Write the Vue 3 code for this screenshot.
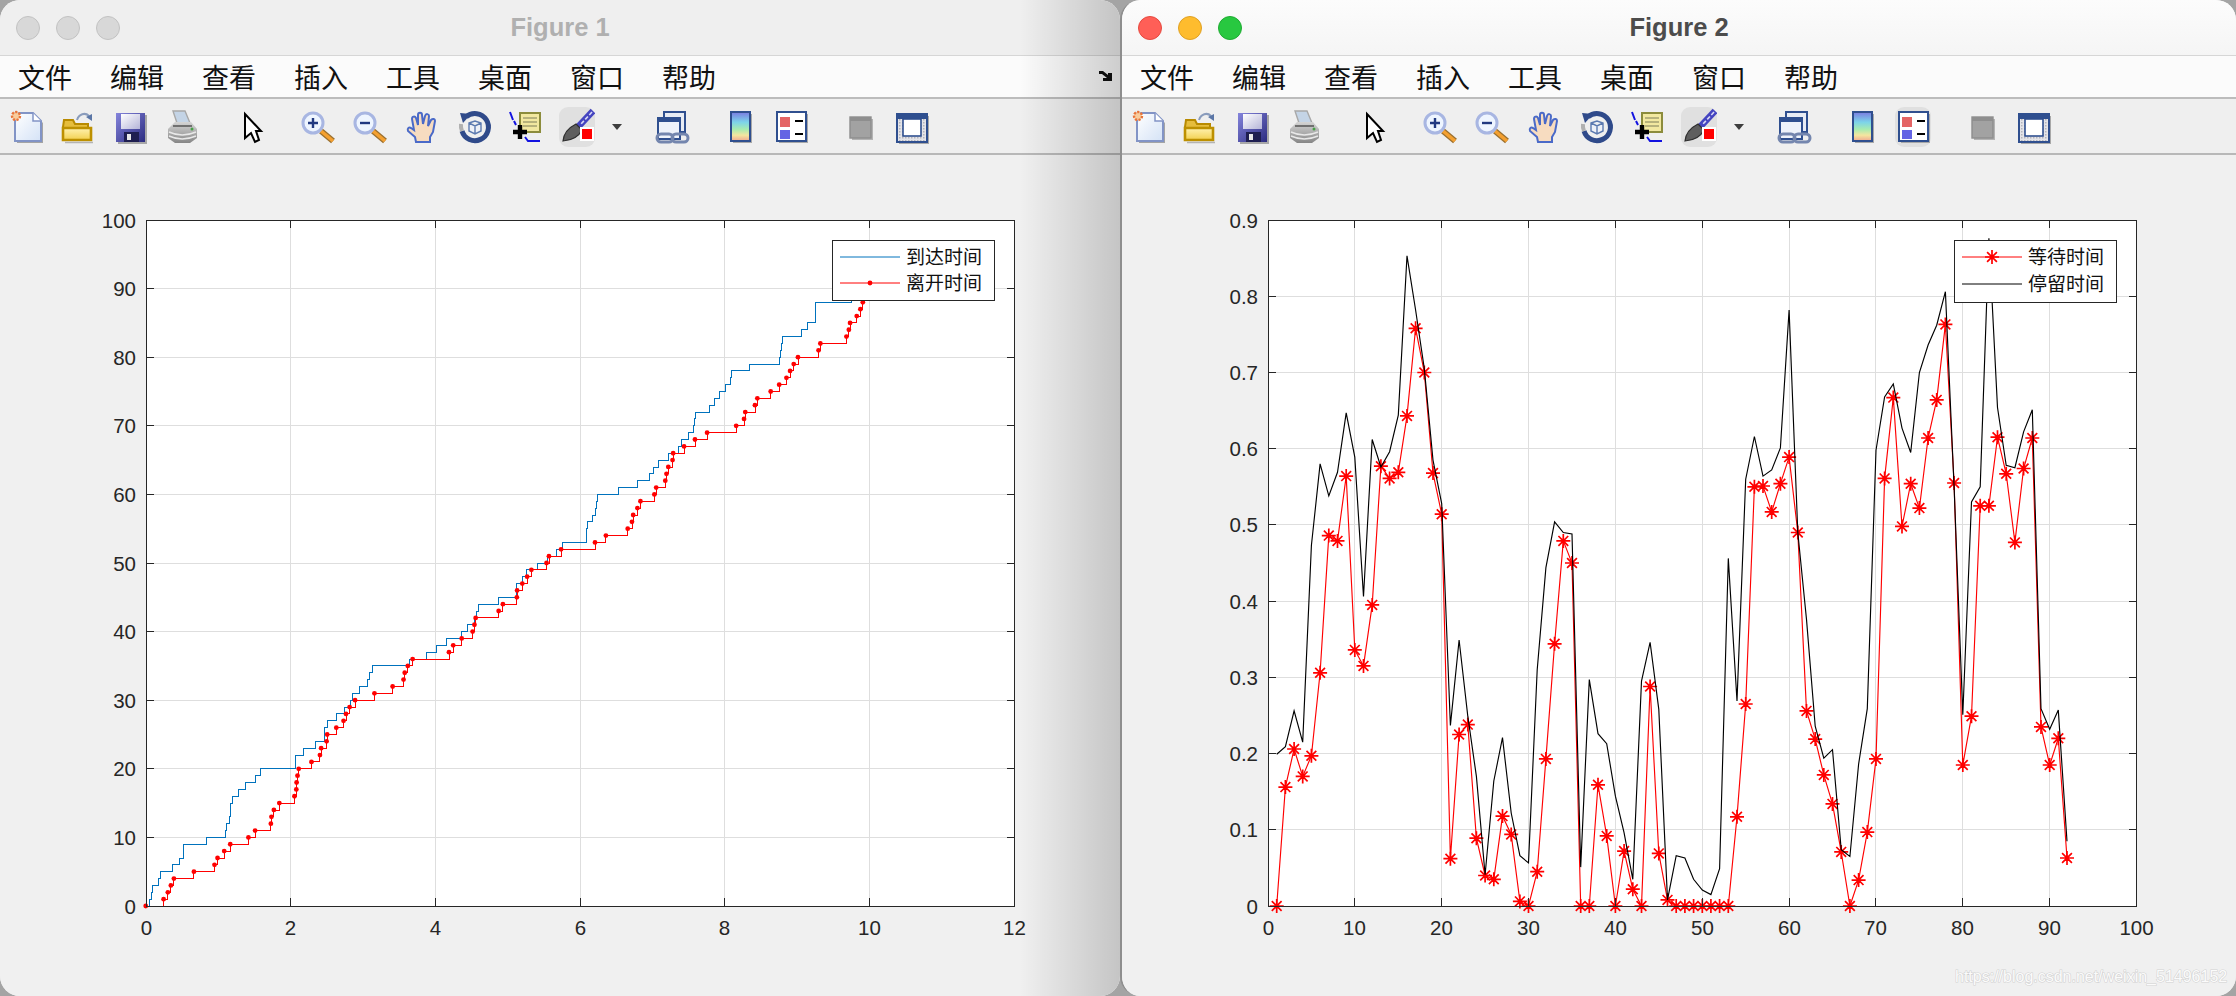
<script setup>
const menus = ['文件', '编辑', '查看', '插入', '工具', '桌面', '窗口', '帮助']

const toolSpec = [
  ['new', 8], ['open', 59], ['save', 112], ['print', 164], ['cursor', 235],
  ['zoomin', 300], ['zoomout', 352], ['hand', 404], ['rotate', 457], ['data', 507],
  ['brush', 559], ['caret', 610, 14], ['link', 654], ['colorbar', 722], ['legend', 773],
  ['square', 843], ['plotbox', 893]
]
let edge = 0
const tools = toolSpec.map(([name, left, width = 36]) => {
  const gap = left - edge
  edge = left + width
  return { name, gap, width }
})

/* Figure 1: x positions measured per level */
const AX1 = { l: 146, r: 1014, t: 220, b: 906 }
const sx1 = (z) => 100 + z / 1.6505
const sy1 = (v) => AX1.b - v * 6.86
const arrive = [75.5, 81, 85, 86, 96, 99, 119, 131, 137, 137, 176, 207, 209, 213, 215, 216, 218, 229, 240, 256, 265, 322, 323, 336, 356, 370, 371, 375, 391, 404, 414, 416, 429, 442, 445, 449, 510, 539, 556, 571, 597, 606, 618, 622, 624, 657, 687, 688, 697, 704, 722, 739, 754, 763, 803, 803, 804, 812, 818, 819, 821, 856, 887, 907, 914, 921, 938, 955, 959, 971, 980, 981, 983, 1006, 1014, 1022, 1032, 1041, 1042, 1072, 1122, 1123, 1125, 1126, 1158, 1168, 1181, 1181, 1181, 1240, 1245, 1250, 1255]
const leave = [75.5, 105, 112, 117, 122, 155, 189, 194, 205, 215, 245, 256, 282, 283, 287, 296, 321, 324, 324.5, 326, 328, 349, 363, 365, 374, 375, 390, 402, 406, 412, 421, 453, 483, 501, 503, 508, 516, 576, 583, 597, 615, 618, 620, 658, 665, 688, 688.5, 697, 705, 712, 737, 741, 761, 817, 835, 871, 878, 880, 887, 892, 915, 918, 933, 935, 938, 945, 946, 964, 982, 1002, 1050, 1063, 1065, 1081, 1085, 1107, 1121, 1133, 1139, 1145, 1152, 1186, 1189, 1232, 1236, 1238, 1249, 1255, 1259, 1262, 1264, 1266, 1268]

const stairs = (list) => {
  let d = `M${sx1(list[0]).toFixed(1)} ${sy1(0)}`
  list.forEach((z, k) => {
    d += `H${sx1(z).toFixed(1)}V${sy1(k).toFixed(1)}`
  })
  return d
}
const bluePath = stairs(arrive)
const redPath = stairs(leave)
const redDots = leave.map((z, k) => ({ x: sx1(z), y: sy1(k) }))

/* Figure 2 */
const AX2 = { l: 1268, r: 2136.5, t: 220, b: 906 }
const sx2 = (v) => AX2.l + v * 8.685
const sy2 = (v) => AX2.b - v * 762.2
const wait = [0, .156, .206, .17, .197, .306, .486, .479, .564, .336, .315, .395, .577, .561, .569, .643, .758, .7, .568, .514, .062, .225, .238, .089, .04, .035, .118, .094, .006, 0, .045, .193, .344, .479, .45, 0, 0, .159, .092, 0, .072, .022, 0, .288, .069, .008, 0, 0, 0, 0, 0, 0, 0, .117, .265, .55, .551, .517, .554, .589, .49, .256, .219, .172, .134, .071, 0, .034, .097, .193, .561, .667, .498, .554, .522, .614, .664, .763, .555, .185, .249, .525, .525, .615, .567, .477, .574, .614, .235, .185, .22, .063]
const stay = [.199, .209, .256, .215, .473, .58, .538, .569, .647, .589, .406, .612, .576, .596, .644, .853, .782, .705, .585, .528, .237, .349, .249, .17, .041, .164, .221, .122, .066, .0565, .31, .444, .504, .49, .488, .051, .297, .226, .213, .144, .096, .035, .295, .346, .258, .008, .066, .063, .035, .021, .015, .049, .456, .269, .56, .616, .564, .572, .601, .782, .49, .376, .236, .194, .205, .074, .065, .186, .259, .598, .668, .685, .627, .595, .7, .736, .762, .806, .55, .251, .53, .55, .876, .654, .578, .575, .622, .651, .259, .232, .257, .085]
const poly = (list) => list.map((v, i) => `${sx2(i + 1).toFixed(1)},${sy2(v).toFixed(1)}`).join(' ')
const waitLine = poly(wait)
const stayLine = poly(stay)
const waitDots = wait.map((v, i) => ({ x: sx2(i + 1), y: sy2(v) }))
const star = (x, y, r = 7) => {
  const d = r * 0.7
  return `M${x - r} ${y}H${x + r}M${x} ${y - r}V${y + r}M${x - d} ${y - d}L${x + d} ${y + d}M${x - d} ${y + d}L${x + d} ${y - d}`
}
const waitStars = waitDots.map((p) => star(+p.x.toFixed(1), +p.y.toFixed(1))).join('')
const legendStar = star(1992, 257)

const range = (n) => Array.from({ length: n }, (_, i) => i)
const crisp = (v) => Math.floor(v) + 0.5

const xt1 = range(7).map((i) => ({ x: crisp(AX1.l + i * (AX1.r - AX1.l) / 6), label: String(i * 2) }))
const yt1 = range(11).map((i) => ({ y: crisp(AX1.b - i * 68.6), label: String(i * 10) }))
const xt2 = range(11).map((i) => ({ x: crisp(AX2.l + i * 86.85), label: String(i * 10) }))
const yt2 = range(10).map((i) => ({ y: crisp(AX2.b - i * 76.22), label: i === 0 ? '0' : (i / 10).toFixed(1) }))

const windows = [
  { id: 1, title: 'Figure 1', active: false, xt: xt1, yt: yt1, ax: AX1, view: '0 155 1120 841' },
  { id: 2, title: 'Figure 2', active: true, xt: xt2, yt: yt2, ax: AX2, view: '1122 155 1114 841' }
]
</script>

<template>
  <div class="desktop">
    <svg class="defs" aria-hidden="true">
      <defs>
        <linearGradient id="gDoc" x1="0" y1="0" x2="1" y2="1">
          <stop offset="0" stop-color="#ffffff" />
          <stop offset="1" stop-color="#d4e2f6" />
        </linearGradient>
        <linearGradient id="gFold" x1="0" y1="0" x2="0" y2="1">
          <stop offset="0" stop-color="#fff2b0" />
          <stop offset="1" stop-color="#f2d04e" />
        </linearGradient>
        <linearGradient id="gDisk" x1="0" y1="0" x2="1" y2="1">
          <stop offset="0" stop-color="#8484dc" />
          <stop offset="1" stop-color="#2c2c80" />
        </linearGradient>
        <linearGradient id="gLabel" x1="0" y1="0" x2="1" y2="1">
          <stop offset="0" stop-color="#ffffff" />
          <stop offset="1" stop-color="#b4b4d8" />
        </linearGradient>
        <linearGradient id="gPrint" x1="0" y1="0" x2="0" y2="1">
          <stop offset="0" stop-color="#d4d4d4" />
          <stop offset="1" stop-color="#868686" />
        </linearGradient>
        <linearGradient id="gRain" x1="0" y1="0" x2="0" y2="1">
          <stop offset="0" stop-color="#7a7ae0" />
          <stop offset="0.35" stop-color="#7cd4ea" />
          <stop offset="0.6" stop-color="#a8ecb0" />
          <stop offset="0.8" stop-color="#f4e6a0" />
          <stop offset="1" stop-color="#f0a890" />
        </linearGradient>
        <pattern id="gHatch" width="3" height="3" patternUnits="userSpaceOnUse">
          <rect width="3" height="3" fill="#e4e4e8" />
          <rect width="1.5" height="1.5" fill="#b4b4bc" />
        </pattern>
      </defs>
    </svg>

    <section v-for="w in windows" :key="w.id" class="window" :class="w.active ? 'front' : 'back'">
      <header class="titlebar">
        <div class="lights">
          <i class="light red"></i>
          <i class="light amber"></i>
          <i class="light green"></i>
        </div>
        <h1 class="title">{{ w.title }}</h1>
      </header>

      <nav class="menubar">
        <span v-for="m in menus" :key="m" class="menu">{{ m }}</span>
        <svg v-if="!w.active" class="dock" width="15" height="11" viewBox="0 0 15 11">
          <path d="M1 0H5L10 4V2H14V10H5V7H9L4 3H1Z" fill="#111" />
        </svg>
      </nav>

      <div class="toolbar">
        <span
          v-for="t in tools"
          :key="t.name"
          class="tool"
          :class="{ on: t.name === 'brush' || (w.active && t.name === 'legend') }"
          :style="{ marginLeft: t.gap + 'px', width: t.width + 'px' }"
        >
          <svg :width="t.width" height="40" :viewBox="`0 0 ${t.width} 40`">
            <template v-if="t.name === 'new'">
              <path d="M9 8H27L35 16V36H9Z" fill="#a4a4a4" />
              <path d="M7 6H25L33 14V34H7Z" fill="url(#gDoc)" stroke="#8294c6" stroke-width="2" />
              <path d="M25 6V14H33" fill="#fff" stroke="#8294c6" stroke-width="1.5" />
              <circle cx="8" cy="9" r="4" fill="#f8cc9c" stroke="#e8743a" stroke-width="2.4" stroke-dasharray="2.2 1.3" />
            </template>
            <template v-else-if="t.name === 'open'">
              <path d="M4 20L5 13H14L16 17H29V24H4Z" fill="#e6bd3c" stroke="#b88a00" stroke-width="2" />
              <path d="M4 33V21H32V33Z" fill="url(#gFold)" stroke="#bd9000" stroke-width="2.6" />
              <path d="M6 35.5H34" stroke="#b4b4b4" stroke-width="1.5" />
              <path d="M18 13C20 7 26 5 30 9" fill="none" stroke="#8a9cbc" stroke-width="2" />
              <path d="M27 10L33 7L33 14Z" fill="#5b76a6" />
            </template>
            <template v-else-if="t.name === 'save'">
              <rect x="6" y="8" width="29" height="29" fill="#a8a8a8" />
              <rect x="4" y="6" width="29" height="29" fill="url(#gDisk)" />
              <rect x="9" y="7" width="19" height="15" fill="url(#gLabel)" />
              <rect x="12" y="25" width="15" height="10" fill="#1e1e50" />
              <rect x="15" y="27" width="4" height="6" fill="#e8e8e8" />
            </template>
            <template v-else-if="t.name === 'print'">
              <path d="M9 4H21L26 16H13Z" fill="#c4d4e6" stroke="#a8a8a8" stroke-width="1.4" />
              <path d="M4 22L11 15H27L33 22V31L26 36H11L4 31Z" fill="url(#gPrint)" />
              <path d="M5 25Q18 31 32 25M5 29Q18 35 32 29" fill="none" stroke="#e8e8e8" stroke-width="1.4" />
              <path d="M9 19H28" stroke="#707070" stroke-width="2" />
              <circle cx="28" cy="22" r="1.5" fill="#48a048" />
            </template>
            <template v-else-if="t.name === 'cursor'">
              <path d="M10 7L26 24H21L24 33L20 35L16 26L10 31Z" fill="#fff" stroke="#000" stroke-width="2" />
            </template>
            <template v-else-if="t.name === 'zoomin' || t.name === 'zoomout'">
              <path d="M21 24L33 34" stroke="#9a7030" stroke-width="6" />
              <path d="M21 24L33 34" stroke="#f4a030" stroke-width="3.5" />
              <circle cx="13" cy="16" r="10" fill="#eef5ff" stroke="#a8b6e2" stroke-width="3" />
              <path :d="t.name === 'zoomin' ? 'M8 16H18M13 11V21' : 'M8 16H18'" stroke="#203880" stroke-width="2.4" />
            </template>
            <template v-else-if="t.name === 'hand'">
              <path d="M12 35L11 30L4 24C3 21 5 20 7 21L10 23L8 12C8 9 11 9 12 11L14 18L14 8C14 5 18 5 18 8L19 17L21 9C22 6 25 7 25 9L24 19L27 13C29 11 31 12 31 14L29 25L26 30V35Z" fill="#f7dcc0" stroke="#4a6ac8" stroke-width="2" />
            </template>
            <template v-else-if="t.name === 'rotate'">
              <path d="M9 10A13.5 13.5 0 1 1 5 24" fill="none" stroke="#2f4a8a" stroke-width="5" />
              <path d="M5 24A13.5 13.5 0 0 1 4 17" fill="none" stroke="#b0b0b0" stroke-width="4" />
              <path d="M3 6L14 7L6 16Z" fill="#2f4a8a" />
              <path d="M12 16L18 14L24 16V24L18 27L12 24ZM12 16L18 19L24 16M18 19V27" fill="#eef1f8" stroke="#5c7ab0" stroke-width="1.4" />
            </template>
            <template v-else-if="t.name === 'data'">
              <rect x="13" y="6" width="20" height="19" fill="#f2e8a0" stroke="#8c8c3c" stroke-width="2" />
              <path d="M16 11H30M16 15H30M16 19H30" stroke="#a4a070" stroke-width="1.6" />
              <path d="M3 5L6 13M7 14L9 18M18 30L21 34H33" fill="none" stroke="#1212e0" stroke-width="2" />
              <path d="M6 25H20M13 18V32" stroke="#000" stroke-width="4.4" />
            </template>
            <template v-else-if="t.name === 'brush'">
              <path d="M34 4L19 20" stroke="#4444c0" stroke-width="6.5" />
              <path d="M33 5L22 17" stroke="#d8d8f4" stroke-width="1.6" stroke-dasharray="4 2" />
              <path d="M17 17L23 23Q18 33 4 34Q5 23 17 17Z" fill="#5e5e5e" stroke="#2e2e2e" stroke-width="1.2" />
              <rect x="21" y="20" width="14" height="14" fill="#fff" />
              <rect x="23" y="22" width="10" height="10" fill="#f00" />
            </template>
            <template v-else-if="t.name === 'caret'">
              <path d="M2 17H12L7 23Z" fill="#3e3e3e" />
            </template>
            <template v-else-if="t.name === 'link'">
              <rect x="10" y="5" width="21" height="20" fill="#e8ecf4" stroke="#2f4f8f" stroke-width="2" />
              <rect x="4" y="11" width="22" height="21" fill="#eef2fa" stroke="#2f4f8f" stroke-width="2" />
              <rect x="4" y="11" width="22" height="4" fill="#2f4f8f" />
              <rect x="3" y="27" width="16" height="8" rx="4" fill="none" stroke="#7486ae" stroke-width="3" />
              <rect x="18" y="27" width="16" height="8" rx="4" fill="none" stroke="#7486ae" stroke-width="3" />
            </template>
            <template v-else-if="t.name === 'colorbar'">
              <rect x="11" y="7" width="19" height="29" fill="#a8a8a8" />
              <rect x="9" y="5" width="19" height="29" fill="url(#gRain)" stroke="#2f4f8f" stroke-width="2" />
            </template>
            <template v-else-if="t.name === 'legend'">
              <rect x="6" y="7" width="29" height="29" fill="#a8a8a8" />
              <rect x="4" y="5" width="29" height="29" fill="#fff" stroke="#2f4f8f" stroke-width="2" />
              <rect x="7" y="10" width="10" height="10" fill="#e46464" />
              <rect x="7" y="23" width="10" height="9" fill="#6464e4" />
              <path d="M22 14H30M22 27H30" stroke="#000" stroke-width="2" />
            </template>
            <template v-else-if="t.name === 'square'">
              <rect x="9" y="12" width="21" height="21" fill="#b4b4b4" />
              <rect x="7" y="10" width="21" height="21" fill="#a2a2a2" stroke="#8e8e8e" stroke-width="1.4" />
              <rect x="7" y="10" width="21" height="4" fill="#8e8e8e" />
            </template>
            <template v-else>
              <rect x="6" y="9" width="30" height="28" fill="#a8a8a8" />
              <rect x="4" y="7" width="30" height="28" fill="url(#gHatch)" stroke="#2f4f8f" stroke-width="2" />
              <rect x="4" y="7" width="30" height="5" fill="#2f4f8f" />
              <rect x="10" y="12" width="18" height="17" fill="#fff" stroke="#2f4f8f" stroke-width="1.6" />
            </template>
          </svg>
        </span>
      </div>

      <div class="canvas">
        <svg class="figure" :viewBox="w.view" preserveAspectRatio="xMinYMin">
          <rect :x="w.ax.l" :y="w.ax.t" :width="w.ax.r - w.ax.l" :height="w.ax.b - w.ax.t" fill="#fff" />
          <g class="grid" shape-rendering="crispEdges">
            <path v-for="t in w.xt" :key="'gx' + t.label" :d="`M${t.x} ${w.ax.t}V${w.ax.b}`" />
            <path v-for="t in w.yt" :key="'gy' + t.label" :d="`M${w.ax.l} ${t.y}H${w.ax.r}`" />
          </g>

          <template v-if="w.id === 1">
            <path class="line" :d="bluePath" stroke="#0072bd" shape-rendering="crispEdges" />
            <path class="line" :d="redPath" stroke="#f00" shape-rendering="crispEdges" />
            <circle v-for="(p, i) in redDots" :key="i" :cx="p.x" :cy="p.y" r="2.4" fill="#f00" />
          </template>
          <template v-else>
            <polyline class="line mid" :points="waitLine" stroke="#f00" />
            <path class="line bold" :d="waitStars" stroke="#f00" />
            <polyline class="line mid" :points="stayLine" stroke="#000" />
          </template>

          <g class="axes" shape-rendering="crispEdges">
            <path v-for="t in w.xt" :key="'tx' + t.label" :d="`M${t.x} ${w.ax.b}v-8M${t.x} ${w.ax.t}v8`" />
            <path v-for="t in w.yt" :key="'ty' + t.label" :d="`M${w.ax.l} ${t.y}h8M${crisp(w.ax.r)} ${t.y}h-8`" />
            <rect :x="crisp(w.ax.l)" :y="crisp(w.ax.t)" :width="Math.floor(w.ax.r) - Math.floor(w.ax.l)" :height="Math.floor(w.ax.b) - Math.floor(w.ax.t)" fill="none" />
          </g>

          <g class="ticks">
            <text v-for="t in w.xt" :key="'lx' + t.label" :x="t.x" y="935" text-anchor="middle">{{ t.label }}</text>
            <text v-for="t in w.yt" :key="'ly' + t.label" :x="w.ax.l - 10" :y="t.y + 7" text-anchor="end">{{ t.label }}</text>
          </g>

          <g v-if="w.id === 1" class="legend">
            <rect x="832.5" y="240.5" width="162" height="60" fill="#fff" stroke="#262626" shape-rendering="crispEdges" />
            <path class="line" d="M840 257H900" stroke="#0072bd" />
            <path class="line" d="M840 283H900" stroke="#f00" />
            <circle cx="870" cy="283" r="2.4" fill="#f00" />
            <text x="906" y="264">到达时间</text>
            <text x="906" y="290">离开时间</text>
          </g>
          <g v-else class="legend">
            <rect x="1954.5" y="240.5" width="162" height="62" fill="#fff" stroke="#262626" shape-rendering="crispEdges" />
            <path class="line" d="M1962 257H2022" stroke="#f00" />
            <path class="line bold" :d="legendStar" stroke="#f00" />
            <path class="line" d="M1962 284H2022" stroke="#000" />
            <text x="2028" y="264">等待时间</text>
            <text x="2028" y="291">停留时间</text>
          </g>

          <text v-if="w.id === 2" class="mark" x="1955" y="982">https://blog.csdn.net/weixin_51496152</text>
        </svg>
      </div>
    </section>
  </div>
</template>

<style>
html, body {
  margin: 0;
  background: #a4a4a4;
}
</style>

<style scoped>
.desktop {
  display: flex;
  width: 2236px;
  height: 996px;
  overflow: hidden;
  background: #a4a4a4;
}
.defs {
  position: absolute;
  width: 0;
  height: 0;
}
.window {
  position: relative;
  display: flex;
  flex-direction: column;
  height: 996px;
  box-sizing: border-box;
  border-radius: 20px;
  overflow: hidden;
  background: #f0f0f0;
}
.back {
  width: 1120px;
  flex: none;
}
.front {
  width: 1116px;
  flex: none;
  border-left: 2px solid #8e8e8e;
}
.back::after {
  content: "";
  position: absolute;
  top: 0;
  right: 0;
  bottom: 0;
  width: 100px;
  background: linear-gradient(90deg, rgba(0, 0, 0, 0), rgba(0, 0, 0, 0.18));
  pointer-events: none;
}
.titlebar {
  position: relative;
  display: flex;
  align-items: center;
  justify-content: center;
  height: 56px;
  flex: none;
  box-sizing: border-box;
  border-bottom: 1px solid #d6d6d6;
}
.back .titlebar {
  background: #efefef;
}
.front .titlebar {
  background: linear-gradient(#fcfcfc, #f5f5f5);
}
.lights {
  position: absolute;
  left: 16px;
  top: 16px;
  display: flex;
  gap: 16px;
}
.light {
  width: 24px;
  height: 24px;
  border-radius: 50%;
  box-sizing: border-box;
  border: 1px solid #c2c2c2;
  background: #d8d8d8;
}
.front .light.red {
  background: #ff5f57;
  border-color: #e5493f;
}
.front .light.amber {
  background: #febc2e;
  border-color: #dfa023;
}
.front .light.green {
  background: #28c840;
  border-color: #1fab32;
}
.title {
  margin: 0;
  font: bold 25.5px "Liberation Sans", Arial, sans-serif;
}
.back .title {
  color: #b0b0b0;
}
.front .title {
  color: #4c4c4c;
}
.menubar {
  position: relative;
  display: flex;
  align-items: center;
  height: 43px;
  flex: none;
  box-sizing: border-box;
  padding-left: 18px;
  background: #fbfbfb;
  border-bottom: 2px solid #bcbcbc;
}
.menu {
  width: 92px;
  flex: none;
  font: 27px/40px "Noto Sans CJK SC", "Noto Sans", sans-serif;
  color: #111;
}
.dock {
  position: absolute;
  right: 7px;
  top: 15px;
}
.toolbar {
  display: flex;
  align-items: center;
  height: 56px;
  flex: none;
  box-sizing: border-box;
  border-bottom: 2px solid #b8b8b8;
  background: #efefef;
  padding-top: 2px;
}
.tool {
  display: block;
  height: 40px;
  flex: none;
  border-radius: 9px;
}
.tool.on {
  background: #e0e0e0;
}
.tool svg {
  display: block;
}
.canvas {
  flex: 1;
  min-height: 0;
  background: #f0f0f0;
}
.figure {
  display: block;
  width: 100%;
  height: 100%;
}
.grid path {
  fill: none;
  stroke: #dedede;
  stroke-width: 1;
}
.line {
  fill: none;
  stroke-width: 1;
}
.line.mid {
  stroke-width: 1.15;
}
.line.bold {
  stroke-width: 1.7;
}
.axes path,
.axes rect {
  stroke: #262626;
  stroke-width: 1;
}
.ticks text {
  font: 20.5px "Liberation Sans", Arial, sans-serif;
  fill: #262626;
}
.legend text {
  font: 19px "Noto Sans CJK SC", "Noto Sans", sans-serif;
  fill: #111;
}
.mark {
  font: 16px "Liberation Sans", Arial, sans-serif;
  fill: #fbfbfb;
  stroke: rgba(160, 160, 160, 0.4);
  stroke-width: 1.2;
  paint-order: stroke;
}
</style>
